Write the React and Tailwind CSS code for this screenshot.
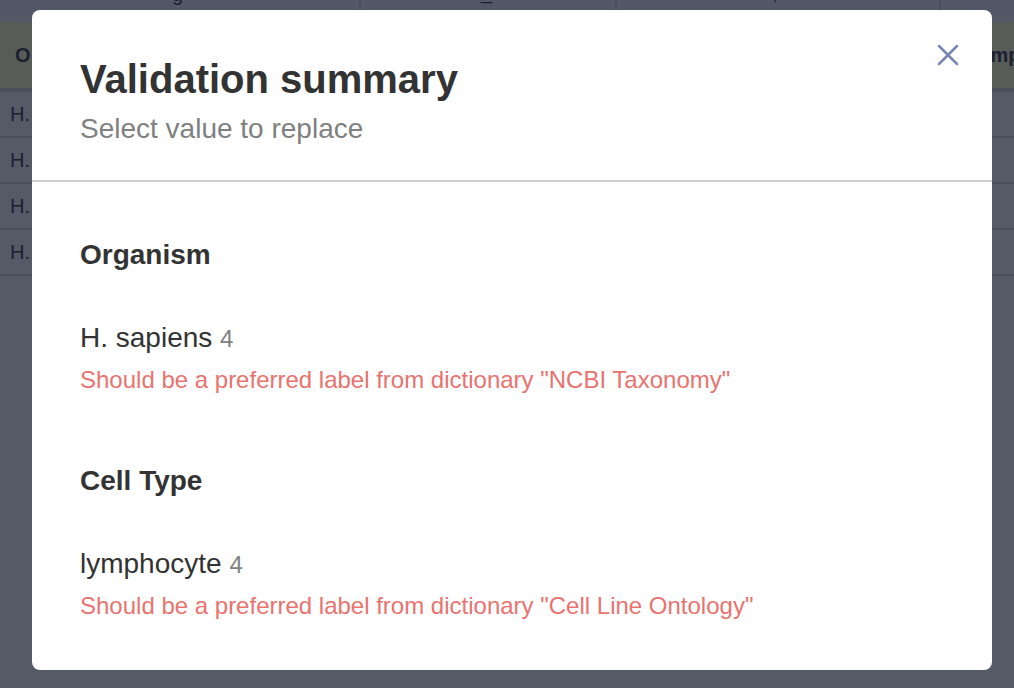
export default function App() {
  const sections = [
    {
      title: "Organism",
      items: [{ value: "H. sapiens", count: 4, error: 'Should be a preferred label from dictionary "NCBI Taxonomy"' }],
    },
    {
      title: "Cell Type",
      items: [{ value: "lymphocyte", count: 4, error: 'Should be a preferred label from dictionary "Cell Line Ontology"' }],
    },
  ];

  return (
    <div
      className="relative w-[1014px] h-[688px] overflow-hidden bg-[#555a67]"
      style={{ fontFamily: '"Liberation Sans", Arial, sans-serif' }}
    >
      {/* Background table, dimmed by the modal overlay */}
      <div className="flex flex-col text-[#1d2030]">
        <div className="flex h-[22px] bg-[#535866] overflow-hidden text-[20px] leading-[20px]">
          <div className="w-[361px] border-r-2 border-[#4b4f5c] pl-[172px] -mt-[16px]">g</div>
          <div className="w-[256px] border-r-2 border-[#4b4f5c] pl-[120px] -mt-[18px]">_</div>
          <div className="w-[324px] border-r-2 border-[#4b4f5c] pl-[155px] -mt-[17px]">,</div>
          <div className="flex-1"></div>
        </div>
        <div className="flex items-center justify-between h-[66px] bg-[#575c59] font-bold text-[20px]">
          <div className="w-[32px] pl-[15px] overflow-hidden whitespace-nowrap">O</div>
          <div className="w-[73px] pl-[25px] overflow-hidden whitespace-nowrap">Samp</div>
        </div>
        <div className="h-[4px] bg-[#4a4e5a]"></div>
        {[0, 1, 2, 3].map((i) => (
          <div key={i} className="flex items-center h-[46px] border-b-2 border-[#4b4f5c] text-[20px]">
            <div className="w-[32px] pl-[10px] overflow-hidden whitespace-nowrap">H.</div>
          </div>
        ))}
      </div>

      {/* Modal */}
      <div className="absolute left-[32px] top-[10px] w-[960px] h-[660px] bg-white rounded-[8px] flex flex-col">
        <button className="absolute top-[34px] right-[33px] text-[#7886b2]">
          <svg width="22" height="22" viewBox="0 0 22 22" fill="none" stroke="currentColor" strokeWidth="2.5" strokeLinecap="round">
            <path d="M2 2 20 20" />
            <path d="M20 2 2 20" />
          </svg>
        </button>

        <div className="px-[48px] pt-[46px] pb-[35px] border-b-2 border-[#cccdd1]">
          <h1 className="text-[40px] leading-[46px] font-bold text-[#333333]">Validation summary</h1>
          <p className="mt-[11px] text-[28px] leading-[32px] text-[#808080]">Select value to replace</p>
        </div>

        <div className="px-[48px] pt-[57px] flex flex-col gap-[71px]">
          {sections.map((s) => (
            <div key={s.title}>
              <h2 className="text-[28px] leading-[32px] font-bold text-[#333333] mb-[51px]">{s.title}</h2>
              {s.items.map((it) => (
                <div key={it.value}>
                  <div className="text-[28px] leading-[32px] text-[#333333]">
                    {it.value} <span className="text-[24px] text-[#808080]">{it.count}</span>
                  </div>
                  <div className="mt-[11px] text-[24px] leading-[28px] text-[#e8736f]">{it.error}</div>
                </div>
              ))}
            </div>
          ))}
        </div>
      </div>
    </div>
  );
}
